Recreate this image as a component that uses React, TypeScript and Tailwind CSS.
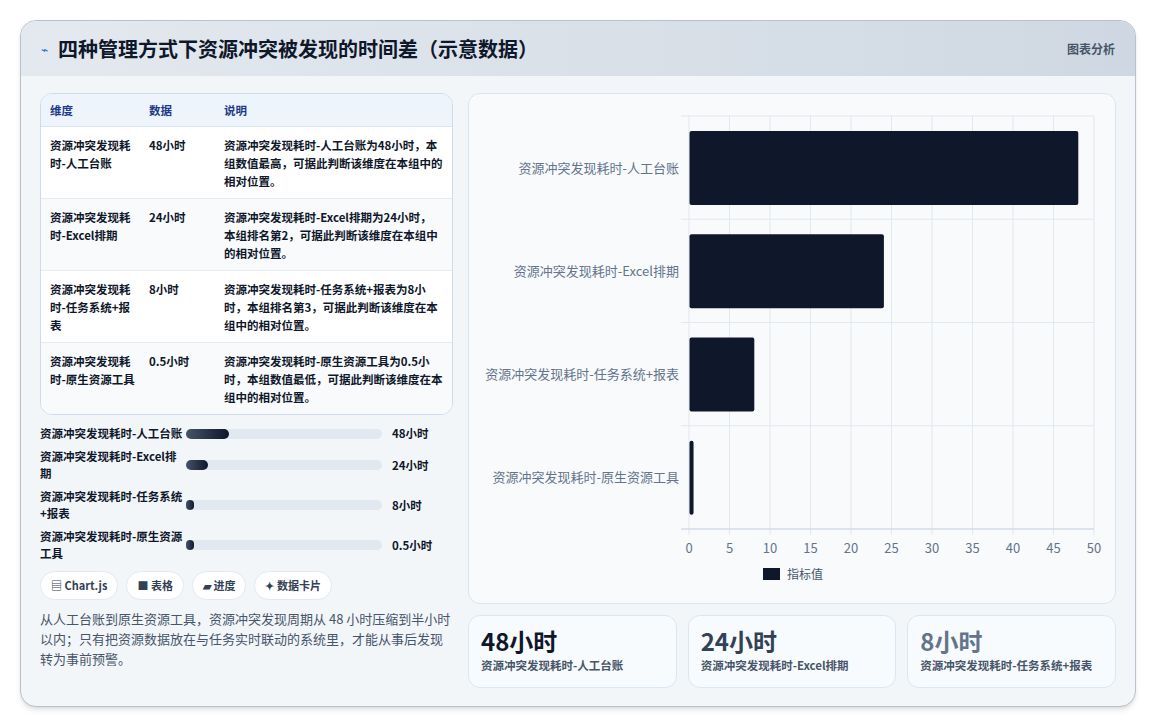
const F = { fontFamily: '"Noto Sans CJK SC", "Noto Sans", sans-serif' };

const rows = [
  { name: "资源冲突发现耗时-人工台账", v: 48, d: "48小时", note: "资源冲突发现耗时-人工台账为48小时，本组数值最高，可据此判断该维度在本组中的相对位置。" },
  { name: "资源冲突发现耗时-Excel排期", v: 24, d: "24小时", note: "资源冲突发现耗时-Excel排期为24小时，本组排名第2，可据此判断该维度在本组中的相对位置。" },
  { name: "资源冲突发现耗时-任务系统+报表", v: 8, d: "8小时", note: "资源冲突发现耗时-任务系统+报表为8小时，本组排名第3，可据此判断该维度在本组中的相对位置。" },
  { name: "资源冲突发现耗时-原生资源工具", v: 0.5, d: "0.5小时", note: "资源冲突发现耗时-原生资源工具为0.5小时，本组数值最低，可据此判断该维度在本组中的相对位置。" },
];

function Chart() {
  const x0 = 220, x1 = 625, y0 = 22, y1 = 435;
  const sx = (v: number) => x0 + ((x1 - x0) * v) / 50;
  const rowH = (y1 - y0) / 4;
  return (
    <svg width="646" height="510" className="block">
      {Array.from({ length: 11 }, (_, i) => (
        <g key={i}>
          <line x1={sx(i * 5)} x2={sx(i * 5)} y1={y0} y2={y1 + 6} stroke="#e2e8f0" />
          <text x={sx(i * 5)} y={y1 + 24} textAnchor="middle" fontSize="13" fill="#64748b">{i * 5}</text>
        </g>
      ))}
      {[0, 1, 2, 3, 4].map((i) => (
        <line key={i} x1={x0 - 8} x2={x1} y1={y0 + i * rowH} y2={y0 + i * rowH} stroke="#e2e8f0" />
      ))}
      <line x1={x0 - 8} x2={x1} y1={y1} y2={y1} stroke="#cbd5e1" />
      {rows.map((r, i) => (
        <g key={i}>
          <rect x={x0 + 0.5} y={y0 + i * rowH + 15} width={sx(r.v) - x0} height={74} rx="2" fill="#0f172a" />
          <text x={x0 - 10} y={y0 + i * rowH + rowH / 2 + 5} textAnchor="end" fontSize="13" fill="#64748b">{r.name}</text>
        </g>
      ))}
      <rect x="294" y="474" width="17" height="12" fill="#0f172a" />
      <text x="318" y="485" fontSize="12" fill="#475569">指标值</text>
    </svg>
  );
}

export default function App() {
  return (
    <div style={F} className="min-h-[728px] w-[1156px] bg-white pt-5 pl-5">
      <div className="w-[1116px] h-[687px] overflow-hidden rounded-2xl border border-[#b8c1cc] bg-[#f3f6f9] shadow-md">
        <div className="flex h-[55px] items-center justify-between bg-gradient-to-r from-[#e4e9ef] to-[#cfd8e2] px-5">
          <div className="flex items-center gap-2.5">
            <span className="text-[12px] text-[#2563eb]">⌁</span>
            <h1 className="text-[20px] font-bold text-[#0f172a]">四种管理方式下资源冲突被发现的时间差（示意数据）</h1>
          </div>
          <span className="text-[12px] font-semibold text-[#475569]">图表分析</span>
        </div>
        <div className="flex gap-[15px] px-[19px] pt-[17px]">
          <div className="w-[415px]">
            <div className="overflow-hidden rounded-xl border border-[#cfdbe8] bg-white text-[11.5px] leading-[18px] text-[#0f172a]">
              <div className="grid grid-cols-[99px_75px_1fr] border-b border-[#dbe4ee] bg-[#eef4fb] px-[9px] py-[7px] font-semibold text-[#1e3a8a]">
                <span>维度</span><span>数据</span><span>说明</span>
              </div>
              {rows.map((r, i) => (
                <div key={i} className={`grid grid-cols-[99px_75px_1fr] px-[9px] pt-[9px] pb-[8px] font-semibold ${i < 3 ? "border-b border-[#e5ebf1]" : ""} ${i % 2 ? "bg-[#f8fafc]" : "bg-white"}`}>
                  <span className="pr-3">{r.name}</span>
                  <span>{r.d}</span>
                  <span>{r.note}</span>
                </div>
              ))}
            </div>
            <div className="mt-2.5 flex flex-col gap-[6px]">
              {rows.map((r, i) => (
                <div key={i} className="flex items-center text-[11.5px] font-semibold leading-[17px] text-[#0f172a]">
                  <span className="w-[146px]">{r.name}</span>
                  <div className="h-[10px] w-[196px] rounded-full bg-[#e2e8f0]">
                    <div className="h-full rounded-full bg-gradient-to-r from-[#475569] to-[#0f172a]" style={{ width: `${Math.max(4, (r.v / 48) * 22)}%` }} />
                  </div>
                  <span className="ml-2.5">{r.d}</span>
                </div>
              ))}
            </div>
            <div className="mt-[9px] flex gap-2 text-[11px] font-semibold text-[#334155]">
              {["▤ Chart.js", "■ 表格", "▰ 进度", "✦ 数据卡片"].map((t) => (
                <span key={t} className="rounded-full border border-[#e2e8f0] bg-white px-2.5 py-[5px]">{t}</span>
              ))}
            </div>
            <p className="mt-[9px] text-[13px] leading-[20px] text-[#475569]">从人工台账到原生资源工具，资源冲突发现周期从 48 小时压缩到半小时以内；只有把资源数据放在与任务实时联动的系统里，才能从事后发现转为事前预警。</p>
          </div>
          <div className="flex-1">
            <div className="h-[511px] overflow-hidden rounded-xl border border-[#dbe4ee] bg-[#f8fafc]">
              <Chart />
            </div>
            <div className="mt-[11px] grid grid-cols-3 gap-[11px]">
              {rows.slice(0, 3).map((r, i) => (
                <div key={i} className="h-[73px] rounded-xl border border-[#dbe6f3] bg-[#f8fbfe] px-3 pt-[9px]">
                  <div className={`text-[24px] font-bold leading-[32px] ${["text-[#0f172a]", "text-[#334155]", "text-[#64748b]"][i]}`}>{r.d}</div>
                  <div className="text-[11.5px] font-semibold text-[#475569]">{r.name}</div>
                </div>
              ))}
            </div>
          </div>
        </div>
      </div>
    </div>
  );
}
